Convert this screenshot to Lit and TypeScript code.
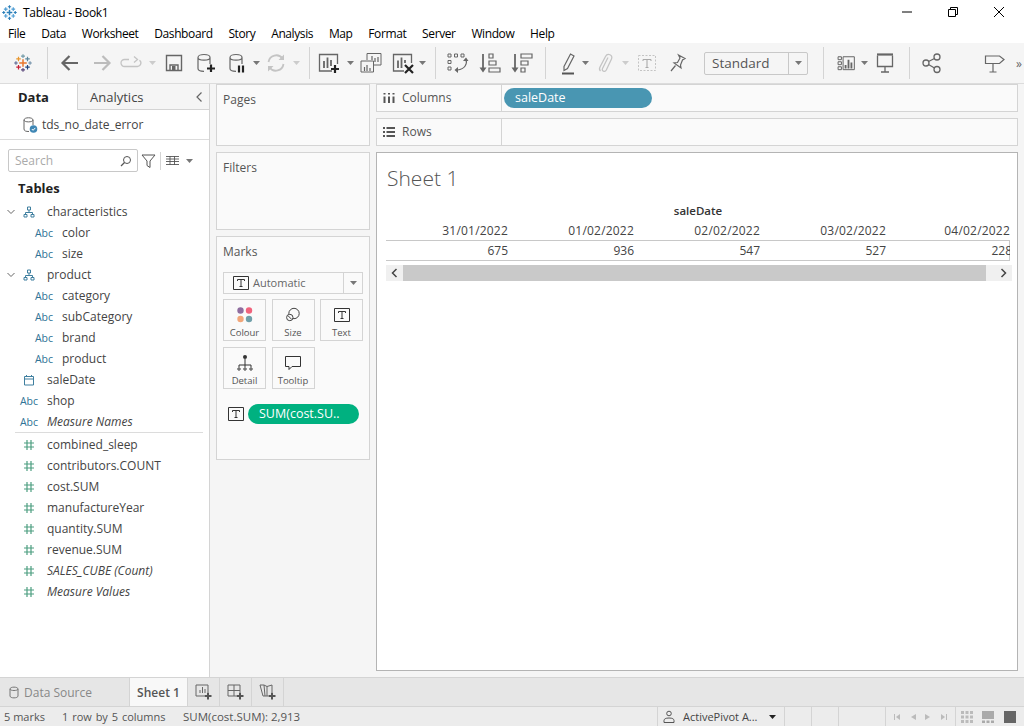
import { LitElement, html, css } from "lit";
import { customElement } from "lit/decorators.js";

const G = "#666";
const L = "#c4c4c4";

const cross = (x: number, y: number, r: number, c: string, w = 1.2) => html`<svg x="0" y="0" width="24" height="24" viewBox="0 0 24 24"><path d="M${x - r} ${y}H${x + r}M${x} ${y - r}V${y + r}" stroke=${c} stroke-width=${w} fill="none"/></svg>`;

const logo = html`<svg width="18" height="18" viewBox="0 0 24 24">
  ${cross(12, 12, 5, "#e8762d", 2)}${cross(6, 6.5, 3, "#e8962d", 1.6)}${cross(18, 6.5, 3, "#5b879b", 1.6)}
  ${cross(6, 17.5, 3, "#c72035", 1.6)}${cross(18, 17.5, 3, "#1f447e", 1.6)}${cross(12, 2.8, 2.6, "#7099a6", 1.5)}
  ${cross(12, 21.2, 2.6, "#59457a", 1.5)}${cross(2.6, 12, 2.4, "#5b6591", 1.5)}${cross(21.4, 12, 2.4, "#6f8fa8", 1.5)}
</svg>`;

const winLogo = html`<svg class="winlogo" width="15" height="15" viewBox="0 0 24 24">
  ${cross(12, 12, 4.5, "#2c7fb8", 2.4)}${cross(6, 6.5, 3, "#4a9bd4", 1.8)}${cross(18, 6.5, 3, "#4a9bd4", 1.8)}
  ${cross(6, 17.5, 3, "#4a9bd4", 1.8)}${cross(18, 17.5, 3, "#4a9bd4", 1.8)}${cross(12, 2.8, 2.6, "#2c7fb8", 1.8)}
  ${cross(12, 21.2, 2.6, "#2c7fb8", 1.8)}${cross(2.8, 12, 2.4, "#2c7fb8", 1.8)}${cross(21.2, 12, 2.4, "#2c7fb8", 1.8)}
</svg>`;

const i24 = (body: unknown) => html`<svg width="24" height="24" viewBox="0 0 24 24" fill="none">${body}</svg>`;

const cyl = html`<svg x="0" y="0" width="24" height="24" viewBox="0 0 24 24" fill="none"><path d="M5 6.5c0-4 12-4 12 0v6.5M5 6.5c0 3.5 12 3.5 12 0M5 6.5v11c0 2.5 3 2.8 6 2.8" stroke=${G} stroke-width="1.2"/></svg>`;

const icons: Record<string, unknown> = {
  logo,
  back: i24(html`<svg width="24" height="24" viewBox="0 0 24 24" fill="none"><path d="M20 12H4.5M11.5 5l-7 7 7 7" stroke=${G} stroke-width="2.2"/></svg>`),
  fwd: i24(html`<svg width="24" height="24" viewBox="0 0 24 24" fill="none"><path d="M4 12h15.5M12.5 5l7 7-7 7" stroke="#bcbcbc" stroke-width="2.2"/></svg>`),
  redo: i24(html`<svg width="24" height="24" viewBox="0 0 24 24" fill="none"><path d="M10 8.500H5.500a3.500 3.500 0 0 0 0 7h13a3.500 3.500 0 0 0 2-6.300M15 5.500l3.500 3-3.500 3" stroke=${L} stroke-width="1.3"/></svg>`),
  save: i24(html`<svg width="24" height="24" viewBox="0 0 24 24" fill="none"><path d="M4.500 4.500h15v15h-15zM8 19v-5h8v5" stroke=${G} stroke-width="1.4"/><rect x="10" y="15" width="3.5" height="4" fill=${G}/></svg>`),
  dsAdd: i24(html`${cyl}<svg width="24" height="24" viewBox="0 0 24 24" fill="none"><path d="M18 13.500v7.500M14 17.500h8" stroke="#222" stroke-width="2.2"/></svg>`),
  pause: i24(html`${cyl}<svg width="24" height="24" viewBox="0 0 24 24" fill="none"><path d="M14 14.500v7M18 14.500v7" stroke="#222" stroke-width="2.2"/></svg>`),
  refresh: i24(html`<svg width="24" height="24" viewBox="0 0 24 24" fill="none"><path d="M4.500 11a7.800 7.800 0 0 1 14-3.500M19.500 13a7.800 7.800 0 0 1-14 3.500" stroke=${L} stroke-width="1.8"/><path d="M20 3.500v5.500h-5.500zM4 20.500V15h5.500z" fill=${L}/></svg>`),
  sheetAdd: i24(html`<svg width="24" height="24" viewBox="0 0 24 24" fill="none"><path d="M15 20H2.500V3.500h18V13" stroke=${G} stroke-width="1.3"/><path d="M7 10v7M10.500 6.500V17M14 9v6" stroke=${G} stroke-width="1.8"/><path d="M18 14v8M14 18h8" stroke="#222" stroke-width="2.2"/></svg>`),
  dup: i24(html`<svg width="24" height="24" viewBox="0 0 24 24" fill="none"><path d="M8 9V2.500h14V14h-7" stroke=${G} stroke-width="1"/><path d="M2 10h12.500v11H2z" fill="#f5f5f5" stroke=${G} stroke-width="1"/><path d="M13 9V5M16 11V7M19 11V6M5.500 20v-4M8 20v-6M11 20v-3" stroke=${G} stroke-width="1.2"/></svg>`),
  clear: i24(html`<svg width="24" height="24" viewBox="0 0 24 24" fill="none"><path d="M13 20H2.500V3.500h18V12" stroke=${G} stroke-width="1.3"/><path d="M7 9.500v7.500M10.500 6.500V17M14 9v3" stroke=${G} stroke-width="1.8"/><path d="M14 14l8 8M22 14l-8 8" stroke="#222" stroke-width="2.2"/></svg>`),
  swap: i24(html`<svg width="24" height="24" viewBox="0 0 24 24" fill="none"><path d="M3 3h3v3H3zM9.500 3h3v3h-3zM16 3h3v3h-3zM3 9.500h3v3H3zM3 16h3v3H3z" stroke=${G}/><path d="M21 8c1.500 5-1 10-8.500 11" stroke=${G} stroke-width="1.2"/><path d="M18 10l3-3.500 2.500 3.500zM13 16v6l-3.500-3z" fill=${G}/></svg>`),
  sortAsc: i24(html`<svg width="24" height="24" viewBox="0 0 24 24" fill="none"><path d="M6 3v15" stroke=${G} stroke-width="1.8"/><path d="M2.500 16.500h7L6 21.500z" fill=${G}/><path d="M12 3h4v4h-4zM12 10h7v4h-7zM12 17h11v4H12z" stroke=${G} stroke-width="1.2"/></svg>`),
  sortDesc: i24(html`<svg width="24" height="24" viewBox="0 0 24 24" fill="none"><path d="M6 3v15" stroke=${G} stroke-width="1.8"/><path d="M2.500 16.500h7L6 21.500z" fill=${G}/><path d="M12 3h11v4H12zM12 10h7v4h-7zM12 17h4v4h-4z" stroke=${G} stroke-width="1.2"/></svg>`),
  pen: i24(html`<svg width="24" height="24" viewBox="0 0 24 24" fill="none"><path d="M8 15.500 14.500 3l3.500 2-6.500 12.500-3.500 2z" stroke=${G} stroke-width="1.2"/><path d="M6 22.500h12" stroke="#555" stroke-width="2"/></svg>`),
  clip: i24(html`<svg width="24" height="24" viewBox="0 0 24 24" fill="none"><path d="M15 6.500 9.500 17.500c-1.200 2.500 2.500 4 3.800 1.500l5.200-11c1.800-4-4-6.500-6-2.500L7 16c-.8 1.500-.5 3 .5 4" stroke=${L} stroke-width="1.3"/></svg>`),
  textBox: i24(html`<svg width="24" height="24" viewBox="0 0 24 24" fill="none"><path d="M3.500 4.500h17v15h-17z" stroke=${L} stroke-dasharray="2 1.500"/><path d="M8 8.500h8M12 8.500v8M10.500 16.500h3M8 8.500v1.500M16 8.500v1.500" stroke="#aaa" stroke-width="1.1"/></svg>`),
  pin: i24(html`<svg width="24" height="24" viewBox="0 0 24 24" fill="none"><path d="M13.500 4l6.500 3.500-2.500 1.500-2 5 .5 3-7-5 3.500-.5 2.500-4.500zM10.500 14.500 6 20" stroke=${G} stroke-width="1.2"/></svg>`),
  showMe: html`<svg width="20" height="20" viewBox="0 0 24 24" fill="none"><path d="M2.500 4.500h4v3.500h-4zM2.500 10.500h4V14h-4zM2.500 16.500h4V20h-4zM8.500 4.500h13.500V20H8.500z" stroke=${G} stroke-width="1.2"/><path d="M11.500 18.500v-4M15 18.500V8M18.500 18.500v-7" stroke=${G} stroke-width="2.2"/></svg>`,
  present: i24(html`<svg width="24" height="24" viewBox="0 0 24 24" fill="none"><path d="M4 3.500h16" stroke=${G} stroke-width="2.2"/><path d="M4.500 4.500v11h15v-11M12 15.500v5.500M8 21h8" stroke=${G} stroke-width="1.3"/></svg>`),
  share: i24(html`<svg width="24" height="24" viewBox="0 0 24 24" fill="none"><circle cx="6" cy="12" r="3" stroke=${G} stroke-width="1.3"/><circle cx="17" cy="6" r="3" stroke=${G} stroke-width="1.3"/><circle cx="17" cy="18.5" r="3" stroke=${G} stroke-width="1.3"/><path d="M8.500 10.500 14.500 7.500M8.500 13.500l6 3.500" stroke=${G} stroke-width="1.3"/></svg>`),
  sign: i24(html`<svg width="24" height="24" viewBox="0 0 24 24" fill="none"><path d="M3.500 5h14l4.500 3.500-4.500 4h-14zM11 12.500v8.500M7.500 21h7" stroke=${G} stroke-width="1.2"/></svg>`),
  more: html`<span class="more">»</span>`,
};

// toolbar, left to right: [icon or gap, slot width]
const tools: [string, number][] = [
  ["logo", 46], ["sep", 2], ["gap", 6], ["back", 32], ["fwd", 32], ["redo", 26], ["caretL", 16], ["save", 28],
  ["dsAdd", 34], ["pause", 30], ["caret", 8], ["refresh", 32], ["caretL", 8], ["gap", 8], ["sep", 2],
  ["sheetAdd", 38], ["caret", 4], ["dup", 38], ["clear", 26], ["caret", 12], ["gap", 6], ["sep", 2],
  ["swap", 42], ["sortAsc", 22], ["sortDesc", 42], ["gap", 2], ["sep", 2], ["gap", 10],
  ["pen", 24], ["caret", 10], ["clip", 30], ["caretL", 10], ["textBox", 34], ["pin", 26], ["gap", 14],
  ["combo", 104], ["gap", 14], ["sep", 2], ["gap", 8], ["showMe", 27], ["caret", 10], ["present", 32], ["gap", 7], ["sep", 2],
  ["share", 44], ["gap", 20], ["sign", 40], ["more", 10],
];

const menus = ["File", "Data", "Worksheet", "Dashboard", "Story", "Analysis", "Map", "Format", "Server", "Window", "Help"];

type Field = { name: string; kind: "tree" | "abc" | "cal" | "num"; sub?: boolean; calc?: boolean };
const dims: Field[] = [
  { name: "characteristics", kind: "tree" },
  { name: "color", kind: "abc", sub: true },
  { name: "size", kind: "abc", sub: true },
  { name: "product", kind: "tree" },
  { name: "category", kind: "abc", sub: true },
  { name: "subCategory", kind: "abc", sub: true },
  { name: "brand", kind: "abc", sub: true },
  { name: "product", kind: "abc", sub: true },
  { name: "saleDate", kind: "cal" },
  { name: "shop", kind: "abc" },
  { name: "Measure Names", kind: "abc", calc: true },
];
const measures: Field[] = [
  { name: "combined_sleep", kind: "num" },
  { name: "contributors.COUNT", kind: "num" },
  { name: "cost.SUM", kind: "num" },
  { name: "manufactureYear", kind: "num" },
  { name: "quantity.SUM", kind: "num" },
  { name: "revenue.SUM", kind: "num" },
  { name: "SALES_CUBE (Count)", kind: "num", calc: true },
  { name: "Measure Values", kind: "num", calc: true },
];

const B = "#3f7f9f";
const fieldIcon = (k: Field["kind"]) => {
  if (k === "abc") return html`<span class="abc">Abc</span>`;
  if (k === "num")
    return html`<svg width="12" height="12" viewBox="0 0 12 12"><path d="M4 1v10M8 1v10M1 4h10M1 8h10" stroke="#4d9e80" stroke-width="1.2" fill="none"/></svg>`;
  if (k === "cal")
    return html`<svg width="12" height="12" viewBox="0 0 12 12" fill="none"><path d="M1.500 2.500h9v8.500h-9zM1.500 5h9M3.500 1v2M8.500 1v2" stroke=${B}/></svg>`;
  return html`<svg width="12" height="12" viewBox="0 0 12 12" fill="none"><path d="M4.500 1h3v3h-3zM1 8.500h3v2.500H1zM8 8.500h3v2.500H8zM6 4v2.500M2.500 8.500v-2h7v2" stroke=${B}/></svg>`;
};

const tBox = html`<svg width="18" height="16" viewBox="0 0 18 16" fill="none"><path d="M1.500 1.500h15v13h-15z" stroke="#333"/><path d="M5.500 4.500h7M9 4.500v7M7.500 11.500h3M5.500 4.500V6M12.500 4.500V6" stroke="#333"/></svg>`;

const markCards = [
  {
    label: "Colour",
    icon: html`<svg width="20" height="20" viewBox="0 0 20 20"><circle cx="5.5" cy="5.5" r="3.2" fill="#8f6d9f"/><circle cx="14" cy="5.5" r="3.2" fill="#f0637c"/><circle cx="5.5" cy="14" r="3.2" fill="#f2a679"/><circle cx="14" cy="14" r="3.2" fill="#6f9fa9"/></svg>`,
  },
  {
    label: "Size",
    icon: html`<svg width="20" height="20" viewBox="0 0 20 20" fill="none"><circle cx="11" cy="8.5" r="5.2" stroke="#444"/><circle cx="6.8" cy="12.5" r="3.2" fill="#fafafa" stroke="#444"/><path d="M5 10.700l3.600 3.600" stroke="#444"/></svg>`,
  },
  { label: "Text", icon: tBox },
  {
    label: "Detail",
    icon: html`<svg width="20" height="20" viewBox="0 0 20 20" fill="none"><circle cx="10" cy="4" r="2" fill="#333"/><path d="M10 6v6M4 14v-2h12v2M10 12v2" stroke="#333"/><circle cx="4" cy="16" r="1.2" stroke="#333"/><circle cx="10" cy="16" r="1.2" stroke="#333"/><circle cx="16" cy="16" r="1.2" stroke="#333"/></svg>`,
  },
  {
    label: "Tooltip",
    icon: html`<svg width="20" height="20" viewBox="0 0 20 20" fill="none"><path d="M2.500 3.500h15v10H9l-3 3v-3H2.500z" stroke="#333"/></svg>`,
  },
];

const sheetTabIcons = [
  html`<svg width="20" height="18" viewBox="0 0 20 18" fill="none"><path d="M10 13H2V2h12v7" stroke="#666"/><path d="M6 10V7M8.500 10V4M11 10V6" stroke="#666"/><path d="M14 9.500v7M10.500 13h7" stroke="#555" stroke-width="2"/></svg>`,
  html`<svg width="20" height="18" viewBox="0 0 20 18" fill="none"><path d="M10 13H2V2h12v7M2 7.500h12M8 2v11" stroke="#666"/><path d="M14 9.500v7M10.500 13h7" stroke="#555" stroke-width="2"/></svg>`,
  html`<svg width="20" height="18" viewBox="0 0 20 18" fill="none"><path d="M10 13H5L2 2h4l3 1.500L14 2v7M6 2l1 11M9 3.500V13" stroke="#666"/><path d="M14 9.500v7M10.500 13h7" stroke="#555" stroke-width="2"/></svg>`,
];

const dates = ["31/01/2022", "01/02/2022", "02/02/2022", "03/02/2022", "04/02/2022"];
const values = ["675", "936", "547", "527", "228"];

const smallCaret = (c = "#777") => html`<svg width="7" height="4" viewBox="0 0 7 4"><path d="M0 0h7L3.500 4z" fill=${c}/></svg>`;

@customElement("app-root")
export class AppRoot extends LitElement {
  static styles = css`
    :host {
      display: block;
      font-family: "Open Sans", "Noto Sans", sans-serif;
      font-size: 12px;
      color: #333;
    }
    .app {
      width: 1024px;
      height: 726px;
      display: flex;
      flex-direction: column;
      background: #f5f5f5;
      overflow: hidden;
    }
    .titlebar {
      height: 22px;
      flex: none;
      background: #fff;
      display: flex;
      align-items: center;
      color: #000;
      padding: 2px 2px 0 0;
      box-sizing: border-box;
    }
    .winlogo {
      margin-left: 2px;
      margin-right: 6px;
    }
    .title {
      flex: 1;
      letter-spacing: -0.3px;
    }
    .winbtn {
      width: 46px;
      display: flex;
      justify-content: center;
    }
    .menubar {
      height: 21px;
      flex: none;
      box-sizing: border-box;
      padding: 1px 0 0 8px;
      background: #fff;
      display: flex;
      align-items: center;
      gap: 15.8px;
      color: #000;
      letter-spacing: -0.4px;
    }
    .toolbar {
      height: 41px;
      flex: none;
      box-sizing: border-box;
      border-bottom: 1px solid #dcdcdc;
      display: flex;
      align-items: center;
      background: #f5f5f5;
      overflow: hidden;
    }
    .slot {
      flex: none;
      height: 24px;
      display: flex;
      align-items: center;
      justify-content: center;
      overflow: visible;
    }
    .slot svg {
      flex: none;
    }
    .sepline {
      width: 1px;
      height: 32px;
      background: #d4d4d4;
    }
    .more {
      font-size: 12px;
      color: #666;
    }
    .combo {
      flex: none;
      height: 23px;
      box-sizing: border-box;
      border: 1px solid #c8c8c8;
      border-radius: 2px;
      display: flex;
      align-items: center;
      font-size: 13.5px;
      color: #555;
      padding-left: 7px;
    }
    .combo span {
      flex: 1;
    }
    .combo div {
      width: 18px;
      height: 100%;
      border-left: 1px solid #c8c8c8;
      display: flex;
      align-items: center;
      justify-content: center;
    }
    .main {
      flex: none;
      height: 593px;
      display: flex;
      min-height: 0;
    }
    .left {
      width: 210px;
      flex: none;
      box-sizing: border-box;
      background: #fff;
      border-right: 1px solid #d4d4d4;
      display: flex;
      flex-direction: column;
    }
    .tabs {
      height: 26px;
      display: flex;
      flex: none;
    }
    .tab-data {
      width: 77px;
      padding-left: 18px;
      box-sizing: border-box;
      font-weight: 700;
      color: #222;
      line-height: 26px;
      font-size: 13px;
    }
    .tab-analytics {
      flex: 1;
      background: #f5f5f5;
      border-left: 1px solid #d4d4d4;
      border-bottom: 1px solid #d4d4d4;
      padding-left: 12px;
      line-height: 26px;
      color: #444;
      font-size: 13px;
      display: flex;
      justify-content: space-between;
      align-items: center;
    }
    .tab-analytics svg {
      margin-right: 6px;
    }
    .source {
      height: 30px;
      flex: none;
      box-sizing: border-box;
      border-bottom: 1px solid #dcdcdc;
      display: flex;
      align-items: center;
      padding-left: 22px;
      gap: 4px;
      color: #444;
      font-size: 12px;
    }
    .searchrow {
      display: flex;
      align-items: center;
      padding: 9px 0 0 8px;
      flex: none;
    }
    .search {
      width: 130px;
      height: 23px;
      box-sizing: border-box;
      border: 1px solid #c8c8c8;
      border-radius: 2px;
      display: flex;
      align-items: center;
      justify-content: space-between;
      padding: 0 5px 0 6px;
      color: #aaa;
    }
    .filter {
      margin-left: 3px;
      display: flex;
    }
    .vsep {
      width: 1px;
      height: 18px;
      background: #d4d4d4;
      margin: 0 5px 0 4px;
    }
    .gridcaret {
      margin-left: 7px;
      display: flex;
    }
    .tables {
      font-weight: 700;
      font-size: 13px;
      color: #222;
      padding-left: 18px;
      height: 20px;
      line-height: 20px;
      margin-top: 6px;
      flex: none;
    }
    .rows {
      padding-top: 3px;
    }
    .row {
      height: 21px;
      display: flex;
      align-items: center;
      color: #444;
    }
    .chev {
      width: 17px;
      flex: none;
      padding-left: 7px;
      box-sizing: border-box;
      display: flex;
    }
    .ficon {
      width: 24px;
      margin-right: 6px;
      display: flex;
      justify-content: center;
      flex: none;
    }
    .row.sub .chev {
      width: 32px;
    }
    .row .calc {
      font-style: italic;
    }
    .abc {
      font-size: 10.5px;
      color: #2f7396;
      font-weight: 400;
    }
    .divider {
      height: 1px;
      background: #dcdcdc;
      margin: 0 6px 1px 15px;
    }
    .shelves {
      width: 154px;
      margin-left: 6px;
      flex: none;
      display: flex;
      flex-direction: column;
      gap: 6px;
    }
    .card {
      flex: none;
      box-sizing: border-box;
      background: #fafafa;
      border: 1px solid #d4d4d4;
      padding: 7px 6px;
      color: #555;
      line-height: 16px;
    }
    .pages {
      height: 62px;
    }
    .filters {
      height: 78px;
    }
    .marks {
      height: 224px;
    }
    .markdrop {
      margin-top: 12px;
      height: 22px;
      box-sizing: border-box;
      border: 1px solid #d4d4d4;
      display: flex;
      align-items: center;
      font-size: 11px;
      color: #666;
    }
    .markdrop .mt {
      display: flex;
      margin-left: 8px;
      margin-right: 3px;
    }
    .markdrop .name {
      flex: 1;
    }
    .markdrop .dd {
      width: 18px;
      height: 100%;
      border-left: 1px solid #d4d4d4;
      display: flex;
      align-items: center;
      justify-content: center;
    }
    .markgrid {
      display: grid;
      grid-template-columns: repeat(3, 43px);
      grid-auto-rows: 42px;
      justify-content: space-between;
      gap: 6px 5px;
      margin-top: 5px;
    }
    .mk {
      box-sizing: border-box;
      border: 1px solid #d4d4d4;
      display: flex;
      flex-direction: column;
      align-items: center;
      justify-content: flex-start;
      padding-top: 5px;
      font-size: 9.5px;
      line-height: 13px;
      color: #555;
      gap: 1px;
    }
    .mk svg {
      height: 20px;
    }
    .markpill {
      display: flex;
      align-items: center;
      margin-top: 15px;
      padding-left: 4px;
      gap: 3px;
    }
    .markpill svg {
      flex: none;
    }
    .pill-g {
      width: 111px;
      height: 20px;
      border-radius: 10px;
      background: #00b180;
      color: #fff;
      line-height: 20px;
      padding-left: 11px;
      box-sizing: border-box;
      font-size: 12.5px;
    }
    .work {
      flex: none;
      width: 642px;
      margin-left: 6px;
      display: flex;
      flex-direction: column;
      gap: 6px;
      padding-bottom: 6px;
      box-sizing: border-box;
    }
    .shelf {
      height: 28px;
      flex: none;
      box-sizing: border-box;
      background: #fafafa;
      border: 1px solid #d4d4d4;
      display: flex;
      align-items: center;
    }
    .shelf-label {
      width: 125px;
      height: 100%;
      box-sizing: border-box;
      border-right: 1px solid #d4d4d4;
      display: flex;
      align-items: center;
      color: #555;
      padding: 0 0 1px 6px;
      gap: 7px;
    }
    .pill-b {
      margin-left: 2px;
      width: 148px;
      height: 20px;
      box-sizing: border-box;
      border-radius: 10px;
      background: #4996b2;
      color: #fff;
      padding-left: 11px;
      line-height: 20px;
      font-size: 12.5px;
    }
    .canvas {
      flex: 1;
      background: #fff;
      border: 1px solid #b4b4b4;
      box-sizing: border-box;
      padding: 0 7px 0 9px;
    }
    .sheet-title {
      font-size: 21px;
      font-weight: 300;
      color: #555;
      margin: 10px 0 0 1px;
      height: 30px;
      line-height: 30px;
    }
    .hdr {
      margin-top: 9px;
      width: 624px;
      text-align: center;
      font-weight: 600;
      color: #333;
      line-height: 17px;
      height: 18px;
      font-size: 11.5px;
    }
    .tbl {
      width: 624px;
      overflow: hidden;
      white-space: nowrap;
    }
    .trow {
      display: flex;
      height: 20px;
      align-items: center;
      border-bottom: 1px solid #c8c8c8;
      box-sizing: content-box;
      color: #444;
    }
    .heads {
      letter-spacing: 0.2px;
    }
    .vals {
      border-right: 1px solid #c8c8c8;
      box-sizing: border-box;
      height: 20px;
    }
    .cell {
      flex: none;
      width: 126px;
      padding-right: 4px;
      box-sizing: border-box;
      text-align: right;
    }
    .trow .head-last {
      width: 120px;
      padding-right: 0;
    }
    .scroll {
      margin-top: 4px;
      width: 626px;
      height: 16px;
      background: #f0f0f0;
      display: flex;
      align-items: center;
    }
    .scroll .arrow {
      width: 17px;
      flex: none;
      display: flex;
      justify-content: center;
    }
    .scroll .thumb {
      width: 583px;
      flex: none;
      height: 100%;
      background: #c9c9c9;
    }
    .scroll .spacer {
      width: 9px;
      flex: none;
    }
    .sheets {
      height: 30px;
      flex: none;
      box-sizing: border-box;
      background: #e6e6e6;
      border-top: 1px solid #d4d4d4;
      border-bottom: 1px solid #d4d4d4;
      display: flex;
    }
    .ds-tab {
      width: 130px;
      box-sizing: border-box;
      display: flex;
      align-items: center;
      padding-left: 9px;
      gap: 5px;
      color: #888;
      border-right: 1px solid #d4d4d4;
    }
    .sh-tab {
      width: 58px;
      box-sizing: border-box;
      background: #f8f8f8;
      display: flex;
      align-items: center;
      justify-content: center;
      font-weight: 600;
      color: #555;
      border-right: 1px solid #d4d4d4;
    }
    .new-tab {
      width: 32px;
      box-sizing: border-box;
      border-right: 1px solid #d4d4d4;
      display: flex;
      align-items: center;
      justify-content: center;
    }
    .status {
      height: 19px;
      flex: none;
      background: #ececec;
      display: flex;
      align-items: center;
      font-size: 11px;
      color: #555;
    }
    .st {
      flex: none;
    }
    .st1 {
      width: 62px;
      padding-left: 4px;
      box-sizing: border-box;
    }
    .st2 {
      width: 121px;
      word-spacing: 1px;
    }
    .st3 {
      width: 474px;
      font-size: 11.5px;
    }
    .cellb {
      flex: none;
      height: 100%;
      border-left: 1px solid #d4d4d4;
      box-sizing: border-box;
      display: flex;
      align-items: center;
    }
    .user {
      width: 127px;
      padding-left: 5px;
      gap: 8px;
      color: #444;
    }
    .user .cr {
      display: flex;
      margin-left: 3px;
    }
    .blank {
      width: 27px;
    }
    .blank2 {
      width: 47px;
    }
    .nav {
      width: 70px;
      justify-content: space-around;
      padding: 0 3px;
    }
    .tiles {
      width: 69px;
      justify-content: space-around;
      padding-right: 3px;
    }
  `;

  renderTool([k, w]: [string, number]) {
    if (k === "gap") return html`<div class="slot" style="width:${w}px"></div>`;
    if (k === "sep") return html`<div class="slot" style="width:${w}px"><div class="sepline"></div></div>`;
    if (k === "caret" || k === "caretL")
      return html`<div class="slot" style="width:${w}px">${smallCaret(k === "caret" ? "#777" : "#ccc")}</div>`;
    if (k === "combo")
      return html`<div class="combo" style="width:${w}px"><span>Standard</span><div>${smallCaret()}</div></div>`;
    return html`<div class="slot" style="width:${w}px">${icons[k]}</div>`;
  }

  renderRow(f: Field) {
    return html`<div class="row ${f.sub ? "sub" : ""}">
      <div class="chev">
        ${f.kind === "tree"
          ? html`<svg width="8" height="6" viewBox="0 0 8 6" fill="none"><path d="M.5 1l3.5 3.500L7.500 1" stroke="#666"/></svg>`
          : ""}
      </div>
      <div class="ficon">${fieldIcon(f.kind)}</div>
      <span class=${f.calc ? "calc" : ""}>${f.name}</span>
    </div>`;
  }

  render() {
    return html`<div class="app">
      <div class="titlebar">
        ${winLogo}
        <div class="title">Tableau - Book1</div>
        <div class="winbtn"><svg width="12" height="12" viewBox="0 0 12 12"><path d="M1 6h10" stroke="#000"/></svg></div>
        <div class="winbtn"><svg width="12" height="12" viewBox="0 0 12 12" fill="none"><path d="M1.500 3.500h7v7h-7zM3.500 3.500v-2h7v7h-2" stroke="#000"/></svg></div>
        <div class="winbtn"><svg width="12" height="12" viewBox="0 0 12 12"><path d="M1 1l10 10M11 1L1 11" stroke="#000"/></svg></div>
      </div>
      <div class="menubar">${menus.map((m) => html`<span>${m}</span>`)}</div>
      <div class="toolbar">${tools.map((t) => this.renderTool(t))}</div>
      <div class="main">
        <div class="left">
          <div class="tabs">
            <div class="tab-data">Data</div>
            <div class="tab-analytics">
              <span>Analytics</span>
              <svg width="8" height="12" viewBox="0 0 8 12" fill="none"><path d="M6.500 1.500 2 6l4.500 4.500" stroke="#666" stroke-width="1.2"/></svg>
            </div>
          </div>
          <div class="source">
            <svg width="16" height="18" viewBox="0 0 16 18" fill="none"><path d="M2 4c0-3 9-3 9 0v5M2 4c0 2.500 9 2.500 9 0M2 4v9c0 2 2 2.500 5 2.500" stroke="#666"/><circle cx="11.5" cy="13" r="3.8" fill="#3f87b5"/><path d="M9.800 13l1.300 1.300 2.200-2.400" stroke="#fff" stroke-width="1"/></svg>
            <span>tds_no_date_error</span>
          </div>
          <div class="searchrow">
            <div class="search">
              <span>Search</span>
              <svg width="12" height="12" viewBox="0 0 12 12" fill="none"><circle cx="7" cy="5" r="3.5" stroke="#555"/><path d="M4.500 7.500 1 11" stroke="#555" stroke-width="1.3"/></svg>
            </div>
            <div class="filter"><svg width="15" height="14" viewBox="0 0 15 14" fill="none"><path d="M1 1h13L9 7v6.500L6 11.500V7z" stroke="#555"/></svg></div>
            <div class="vsep"></div>
            <svg width="13" height="9" viewBox="0 0 13 9" fill="none"><path d="M0 .5h13M0 3h13M0 5.500h13M0 8.500h13M4 0v9M8.500 0v9" stroke="#555" stroke-width=".9"/></svg>
            <div class="gridcaret">${smallCaret()}</div>
          </div>
          <div class="tables">Tables</div>
          <div class="rows">
            ${dims.map((f) => this.renderRow(f))}
            <div class="divider"></div>
            ${measures.map((f) => this.renderRow(f))}
          </div>
        </div>
        <div class="shelves">
          <div class="card pages">Pages</div>
          <div class="card filters">Filters</div>
          <div class="card marks">
            Marks
            <div class="markdrop">
              <div class="mt">${tBox}</div>
              <span class="name">Automatic</span>
              <div class="dd">${smallCaret()}</div>
            </div>
            <div class="markgrid">
              ${markCards.map((c) => html`<div class="mk">${c.icon}<span>${c.label}</span></div>`)}
            </div>
            <div class="markpill">${tBox}<div class="pill-g">SUM(cost.SU..</div></div>
          </div>
        </div>
        <div class="work">
          <div class="shelf">
            <div class="shelf-label">
              <svg width="12" height="12" viewBox="0 0 12 12"><path d="M1.500 1v1.500M1.500 4.500V11M6 1v1.500M6 4.500V11M10.500 1v1.500M10.500 4.500V11" stroke="#555" stroke-width="2" fill="none"/></svg>
              <span>Columns</span>
            </div>
            <div class="pill-b">saleDate</div>
          </div>
          <div class="shelf">
            <div class="shelf-label">
              <svg width="12" height="12" viewBox="0 0 12 12"><path d="M0 2h2M3.500 2H12M0 6h2M3.500 6H12M0 10h2M3.500 10H12" stroke="#555" stroke-width="1.8" fill="none"/></svg>
              <span>Rows</span>
            </div>
          </div>
          <div class="canvas">
            <div class="sheet-title">Sheet 1</div>
            <div class="hdr">saleDate</div>
            <div class="tbl">
              <div class="trow heads">
                ${dates.map((d, i) => html`<div class="cell ${i === 4 ? "head-last" : ""}">${d}</div>`)}
              </div>
              <div class="trow vals">
                ${values.map((v) => html`<div class="cell">${v}</div>`)}
              </div>
            </div>
            <div class="scroll">
              <div class="arrow"><svg width="7" height="10" viewBox="0 0 7 10" fill="none"><path d="M5.500 1 1.500 5l4 4" stroke="#444" stroke-width="1.5"/></svg></div>
              <div class="thumb"></div>
              <div class="spacer"></div>
              <div class="arrow"><svg width="7" height="10" viewBox="0 0 7 10" fill="none"><path d="M1.500 1l4 4-4 4" stroke="#444" stroke-width="1.5"/></svg></div>
            </div>
          </div>
        </div>
      </div>
      <div class="sheets">
        <div class="ds-tab">
          <svg width="10" height="13" viewBox="0 0 10 13" fill="none"><path d="M1 3c0-2.500 8-2.500 8 0v7c0 2.500-8 2.500-8 0zM1 3c0 2 8 2 8 0" stroke="#777"/></svg>
          <span>Data Source</span>
        </div>
        <div class="sh-tab">Sheet 1</div>
        ${sheetTabIcons.map((i) => html`<div class="new-tab">${i}</div>`)}
      </div>
      <div class="status">
        <div class="st st1">5 marks</div>
        <div class="st st2">1 row by 5 columns</div>
        <div class="st st3">SUM(cost.SUM): 2,913</div>
        <div class="cellb user">
          <svg width="12" height="14" viewBox="0 0 12 14" fill="none"><circle cx="6" cy="3.5" r="2.3" stroke="#555"/><path d="M1 12.500v-2c0-1.500 1.500-2.500 5-2.500s5 1 5 2.500v2z" stroke="#555"/></svg>
          <span>ActivePivot A...</span>
          <span class="cr">${smallCaret("#222")}</span>
        </div>
        <div class="cellb blank"></div>
        <div class="cellb blank"></div>
        <div class="cellb blank2"></div>
        <div class="cellb nav">
          <svg width="8" height="8" viewBox="0 0 8 8"><path d="M1.500 1v6" stroke="#bbb"/><path d="M7 1v6L3 4z" fill="#bbb"/></svg>
          <svg width="8" height="8" viewBox="0 0 8 8"><path d="M7 1v6L2 4z" fill="#bbb"/></svg>
          <svg width="8" height="8" viewBox="0 0 8 8"><path d="M1 1v6l5-3z" fill="#bbb"/></svg>
          <svg width="8" height="8" viewBox="0 0 8 8"><path d="M6.500 1v6" stroke="#bbb"/><path d="M1 1v6l4-3z" fill="#bbb"/></svg>
        </div>
        <div class="cellb tiles">
          <svg width="12" height="12" viewBox="0 0 12 12"><path d="M0 0h3v3H0zM4.500 0h3v3h-3zM9 0h3v3H9zM0 4.500h3v3H0zM4.500 4.500h3v3h-3zM9 4.500h3v3H9zM0 9h3v3H0zM4.500 9h3v3h-3zM9 9h3v3H9z" fill="#bbb"/></svg>
          <svg width="12" height="12" viewBox="0 0 12 12"><path d="M0 0h12v8H0zM0 9.500h3V12H0zM4.500 9.500h3V12h-3zM9 9.500h3V12H9z" fill="#aaa"/></svg>
          <svg width="12" height="12" viewBox="0 0 12 12"><path d="M0 0h12v12H0z" fill="#666"/></svg>
        </div>
      </div>
    </div>`;
  }
}
